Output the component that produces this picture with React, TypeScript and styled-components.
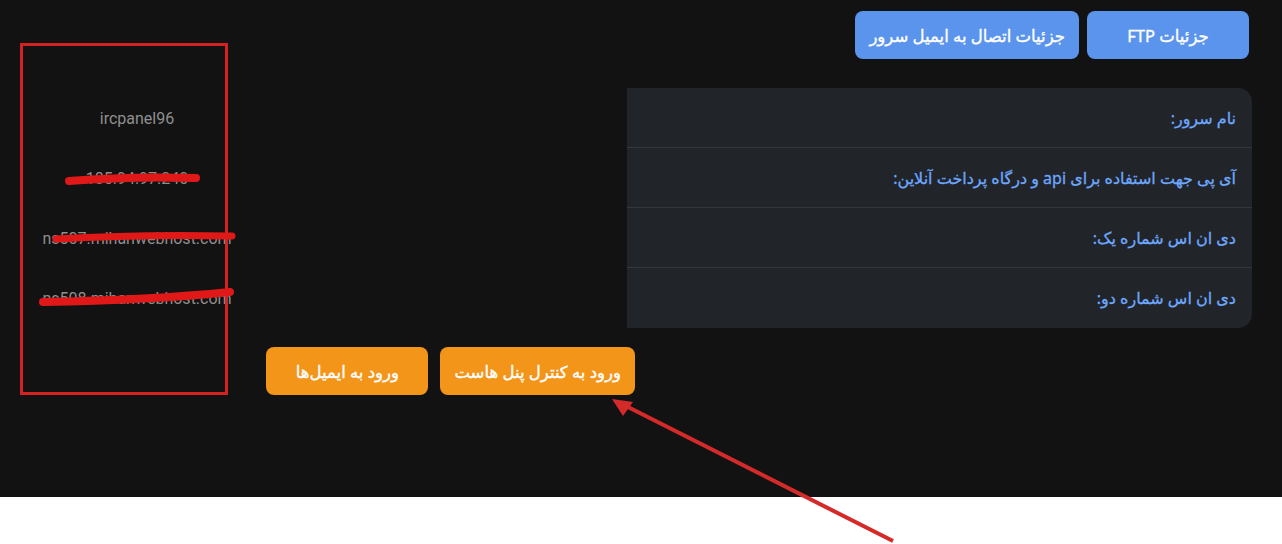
import React from "react";
import styled, { createGlobalStyle } from "styled-components";

const GlobalStyle = createGlobalStyle`
  html, body {
    margin: 0;
    padding: 0;
    background: #ffffff;
  }
  body {
    font-family: "Noto Sans", "DejaVu Sans", sans-serif;
  }
`;

const rows = [
  { label: "نام سرور:", value: "ircpanel96" },
  { label: "آی پی جهت استفاده برای api و درگاه پرداخت آنلاین:", value: "185.94.97.240" },
  { label: "دی ان اس شماره یک:", value: "ns507.mihanwebhost.com" },
  { label: "دی ان اس شماره دو:", value: "ns508.mihanwebhost.com" },
];

const App = () => {
  return (
    <>
      <GlobalStyle />
      <Page>
        <DarkArea>
          <TopBar>
            <ActionButton tone="blue">جزئیات FTP</ActionButton>
            <ActionButton tone="blue">جزئیات اتصال به ایمیل سرور</ActionButton>
          </TopBar>

          <Content>
            <ValuesColumn>
              {rows.map((r) => (
                <ValueCell key={r.value}>{r.value}</ValueCell>
              ))}
            </ValuesColumn>

            <InfoPanel>
              {rows.map((r) => (
                <LabelRow key={r.label}>{r.label}</LabelRow>
              ))}
            </InfoPanel>
          </Content>

          <BottomBar>
            <ActionButton tone="orange">ورود به کنترل پنل هاست</ActionButton>
            <ActionButton tone="orange">ورود به ایمیل‌ها</ActionButton>
          </BottomBar>
        </DarkArea>

        {/* hand-drawn red marks on top of the page */}
        <Markup width="1282" height="544" viewBox="0 0 1282 544">
          <rect x="21.5" y="44.5" width="205" height="349" fill="none" stroke="#d22222" strokeWidth="3" />
          <path d="M69 181 Q130 176 196 178" stroke="#e01818" strokeWidth="8" strokeLinecap="round" fill="none" />
          <path d="M56 239 Q140 234 232 236" stroke="#e01818" strokeWidth="7" strokeLinecap="round" fill="none" />
          <path d="M43 302 Q150 300 230 292" stroke="#e01818" strokeWidth="8" strokeLinecap="round" fill="none" />
          <line x1="893" y1="541" x2="626" y2="406" stroke="#d42a2a" strokeWidth="4" />
          <polygon points="612,399 633,402 623,416" fill="#d42a2a" />
        </Markup>
      </Page>
    </>
  );
};

const Page = styled.div`
  position: relative;
  width: 1282px;
  height: 544px;
  background: #ffffff;
  overflow: hidden;
`;

const DarkArea = styled.div`
  height: 497px;
  background: #121212;
  box-sizing: border-box;
  padding-top: 11px;
`;

const TopBar = styled.div`
  display: flex;
  direction: rtl;
  gap: 8px;
  padding-right: 33px;
`;

const ActionButton = styled.button<{ tone: "blue" | "orange" }>`
  min-width: 162px;
  height: 48px;
  padding: 0 14px;
  border: none;
  border-radius: 8px;
  background: ${(p) => (p.tone === "blue" ? "#5b94ec" : "#f39519")};
  color: #ffffff;
  font-family: "Noto Sans", "DejaVu Sans", sans-serif;
  font-size: 16.5px;
  font-weight: 400;
  -webkit-text-stroke: 0.35px #ffffff;
  direction: rtl;
  cursor: pointer;
`;

const Content = styled.div`
  display: flex;
  justify-content: space-between;
  margin-top: 29px;
  padding-left: 30px;
  padding-right: 30px;
`;

const ValuesColumn = styled.div`
  display: flex;
  flex-direction: column;
  width: 214px;
`;

const ValueCell = styled.div`
  height: 60px;
  display: flex;
  align-items: center;
  justify-content: center;
  color: #8f8f8f;
  font-family: Roboto, "Liberation Sans", sans-serif;
  font-size: 16px;
  white-space: nowrap;
`;

const InfoPanel = styled.div`
  width: 625px;
  background: #212529;
  border-radius: 0 14px 14px 0;
  overflow: hidden;
  direction: rtl;
`;

const LabelRow = styled.div`
  height: 60px;
  box-sizing: border-box;
  display: flex;
  align-items: center;
  padding: 0 16px;
  color: #6ea8fe;
  font-size: 16px;
  font-weight: 400;
  -webkit-text-stroke: 0.3px #6ea8fe;
  border-bottom: 1px solid #32383e;
  &:last-child {
    border-bottom: none;
  }
`;

const BottomBar = styled.div`
  display: flex;
  direction: rtl;
  gap: 12px;
  margin-top: 19px;
  padding-right: 647px;
`;

const Markup = styled.svg`
  position: absolute;
  left: 0;
  top: 0;
  pointer-events: none;
`;

export default App;
